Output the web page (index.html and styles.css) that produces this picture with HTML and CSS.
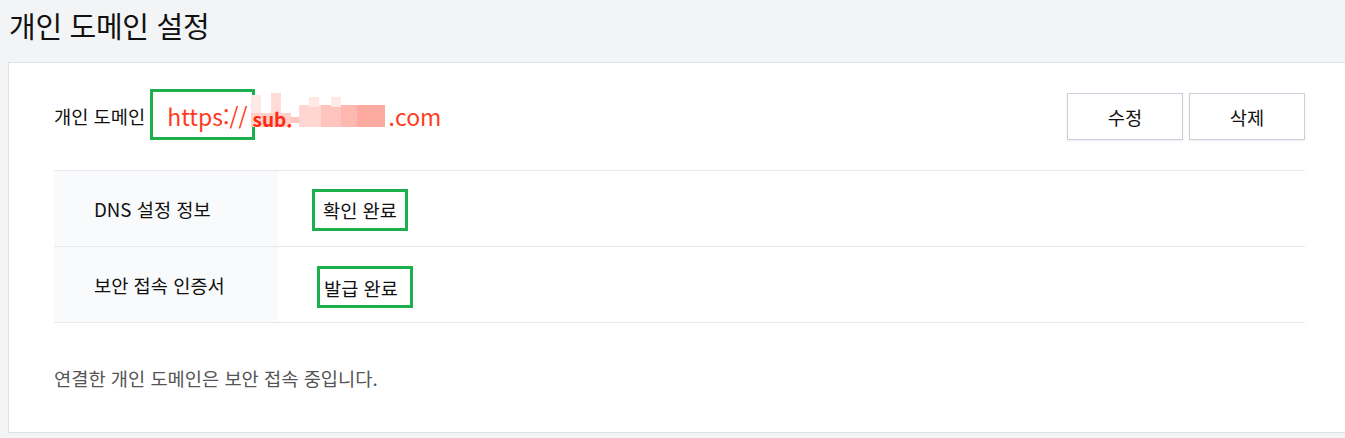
FILE: index.html
```html
<!DOCTYPE html>
<html lang="ko">
<head>
<meta charset="utf-8">
<link rel="stylesheet" href="styles.css">
</head>
<body>
<header class="page-head">
  <h1 class="page-title">개인 도메인 설정</h1>
</header>
<section class="card">
  <div class="domain-row">
    <div class="domain-info">
      <span class="domain-label">개인 도메인</span>
      <span class="domain-url">
        <span class="scheme">https://<span class="mark mark-scheme"></span></span><span class="blur"><b class="sub">sub.</b><span class="px p1"></span><span class="px p2"></span><span class="px p3"></span><span class="px p4"></span><span class="px p5"></span><span class="px p6"></span><span class="px p7"></span><span class="px p8"></span><span class="px p9"></span><span class="px p10"></span></span><span class="tld">.com</span>
      </span>
    </div>
    <div class="actions">
      <button class="btn">수정</button>
      <button class="btn">삭제</button>
    </div>
  </div>

  <div class="info-table">
    <div class="info-row">
      <div class="info-key">DNS 설정 정보</div>
      <div class="info-val"><span class="status status-dns">확인 완료</span></div>
    </div>
    <div class="info-row">
      <div class="info-key">보안 접속 인증서</div>
      <div class="info-val"><span class="status status-cert">발급 완료</span></div>
    </div>
  </div>

  <p class="note">연결한 개인 도메인은 보안 접속 중입니다.</p>
</section>
</body>
</html>
```

FILE: styles.css
```css
* { box-sizing: border-box; }

html, body {
  margin: 0;
  padding: 0;
  background: #f3f4f6;
  font-family: "Noto Sans CJK KR", "Noto Sans", sans-serif;
  color: #111;
  overflow: hidden;
}

.page-head {
  height: 62px;
  padding-left: 9px;
  display: flex;
  align-items: center;
}

.page-title {
  margin: 0;
  font-size: 29px;
  font-weight: 400;
  line-height: 40px;
  margin-top: -13px;
  letter-spacing: -0.3px;
}

.card {
  margin-left: 8px;
  background: #fff;
  border: 1px solid #dee2ea;
  border-right: none;
  height: 371px;
  padding: 30px 40px 0 45px;
}

.domain-row {
  display: flex;
  align-items: center;
  justify-content: space-between;
  height: 47px;
}

.domain-info {
  display: flex;
  align-items: center;
  margin-top: -1px;
}

.domain-label {
  font-size: 18.7px;
  line-height: 26px;
}

.domain-url {
  margin-left: 22px;
  color: #ff3a1e;
  font-size: 23px;
  line-height: 30px;
  display: flex;
  align-items: center;
}

.scheme {
  position: relative;
}

.mark {
  position: absolute;
  border: 3px solid #1bb04d;
  pointer-events: none;
}

.mark-scheme {
  left: -17px;
  right: -7px;
  top: -12px;
  bottom: -9px;
}

.blur {
  position: relative;
  display: inline-block;
  width: 136px;
  height: 30px;
  margin-left: 3px;
}

.sub {
  position: absolute;
  left: 2px;
  top: 3px;
  font-size: 19px;
  font-weight: 700;
  color: #ff2a10;
  z-index: 1;
}

.px {
  position: absolute;
  height: 10px;
  background: #ffc6c0;
}
.p1 { left: 0; top: -6px; width: 10px; height: 20px; background: #ffe9e6; }
.p2 { left: 20px; top: -8px; width: 10px; height: 20px; background: #ffdcd8; }
.p3 { left: 0; top: 12px; width: 40px; height: 14px; background: #ffd0ca; }
.p4 { left: 48px; top: 4px; width: 22px; height: 22px; background: #ffd6d1; }
.p5 { left: 58px; top: -4px; width: 10px; height: 10px; background: #ffe8e5; }
.p6 { left: 70px; top: 4px; width: 20px; height: 22px; background: #ffc4bd; }
.p7 { left: 90px; top: 4px; width: 16px; height: 22px; background: #ffb8b0; }
.p8 { left: 106px; top: 4px; width: 28px; height: 22px; background: #ffaaa1; }
.p9 { left: 80px; top: -4px; width: 10px; height: 10px; background: #ffeae7; }
.p10 { left: 40px; top: 16px; width: 8px; height: 6px; background: #ffc6c0; }

.tld { margin-left: 2px; }

.actions {
  display: flex;
  gap: 6px;
}

.btn {
  width: 116px;
  height: 47px;
  background: #fff;
  border: 1px solid #c8d0db;
  box-shadow: 0 1px 2px rgba(0, 0, 0, 0.08);
  font-family: inherit;
  font-size: 18.7px;
  color: #111;
  padding: 0;
  cursor: pointer;
}

.info-table {
  margin-top: 30px;
  border-top: 1px solid #e6e8eb;
}

.info-row {
  display: flex;
  height: 76px;
  border-bottom: 1px solid #e6e8eb;
}

.info-key {
  width: 224px;
  background: #f9fafb;
  padding-left: 40px;
  display: flex;
  align-items: center;
  font-size: 18.7px;
}

.info-val {
  flex: 1;
  display: flex;
  align-items: center;
  font-size: 18.7px;
}

.status {
  display: inline-flex;
  align-items: center;
  border: 3px solid #1bb04d;
  height: 42px;
}

.status-dns {
  margin-left: 34px;
  padding: 0 8px 0 8px;
  margin-top: 2px;
}

.status-cert {
  margin-left: 39px;
  padding: 0 12px 0 4px;
  margin-top: 5px;
}

.note {
  margin: 42px 0 0;
  font-size: 18.7px;
  line-height: 26px;
  color: #555;
}
```
